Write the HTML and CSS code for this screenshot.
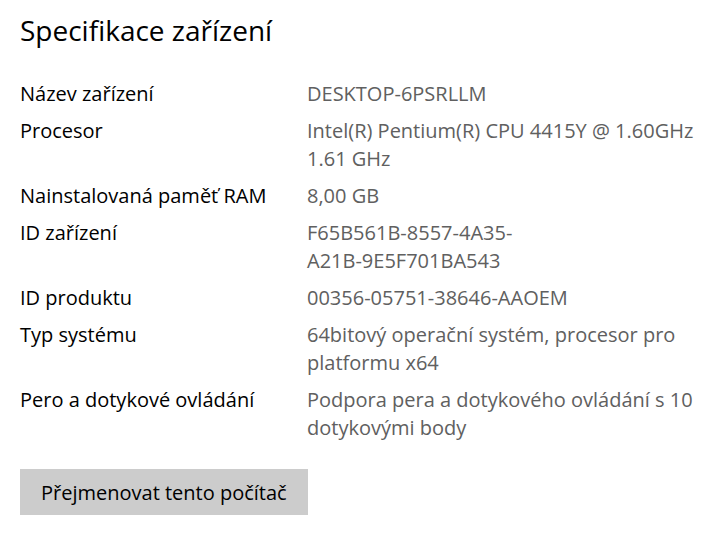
FILE: index.html
```html
<!DOCTYPE html>
<html lang="cs">
  <head>
    <meta charset="UTF-8" />
    <meta name="viewport" content="width=device-width, initial-scale=1.0" />
    <title>Specifikace zařízení</title>
    <link rel="stylesheet" href="styles.css">
  </head>
  <body>
    <div class="container">
      <h1>Specifikace zařízení</h1>

      <dl class="specs">
        <dt>Název zařízení</dt>
        <dd>DESKTOP-6PSRLLM</dd>

        <dt>Procesor</dt>
        <dd>Intel(R) Pentium(R) CPU 4415Y @ 1.60GHz 1.61 GHz</dd>

        <dt>Nainstalovaná paměť RAM</dt>
        <dd>8,00 GB</dd>

        <dt>ID zařízení</dt>
        <dd>F65B561B-8557-4A35-<br>A21B-9E5F701BA543</dd>

        <dt>ID produktu</dt>
        <dd>00356-05751-38646-AAOEM</dd>

        <dt>Typ systému</dt>
        <dd>64bitový operační systém, procesor pro platformu x64</dd>

        <dt>Pero a dotykové ovládání</dt>
        <dd>Podpora pera a dotykového ovládání s 10 dotykovými body</dd>
      </dl>

      <button class="rename">Přejmenovat tento počítač</button>
    </div>
  </body>
</html>
```

FILE: styles.css
```css
* {
  margin: 0;
  padding: 0;
  box-sizing: border-box;
  font-family: "Open Sans", "Noto Sans", sans-serif;
}

body {
  background: #ffffff;
  color: #000000;
}

.container {
  padding: 12px 20px 0;
}

h1 {
  font-size: 28px;
  font-weight: 400;
  line-height: 36px;
  margin-bottom: 32px;
}

.specs {
  display: grid;
  grid-template-columns: 287px 390px;
  row-gap: 9px;
  font-size: 20px;
  line-height: 28px;
}

.specs dd {
  color: #606060;
}

.rename {
  margin-top: 27px;
  height: 46px;
  padding: 0 21px;
  border: none;
  background: #cccccc;
  color: #000000;
  font-size: 20px;
}
```
